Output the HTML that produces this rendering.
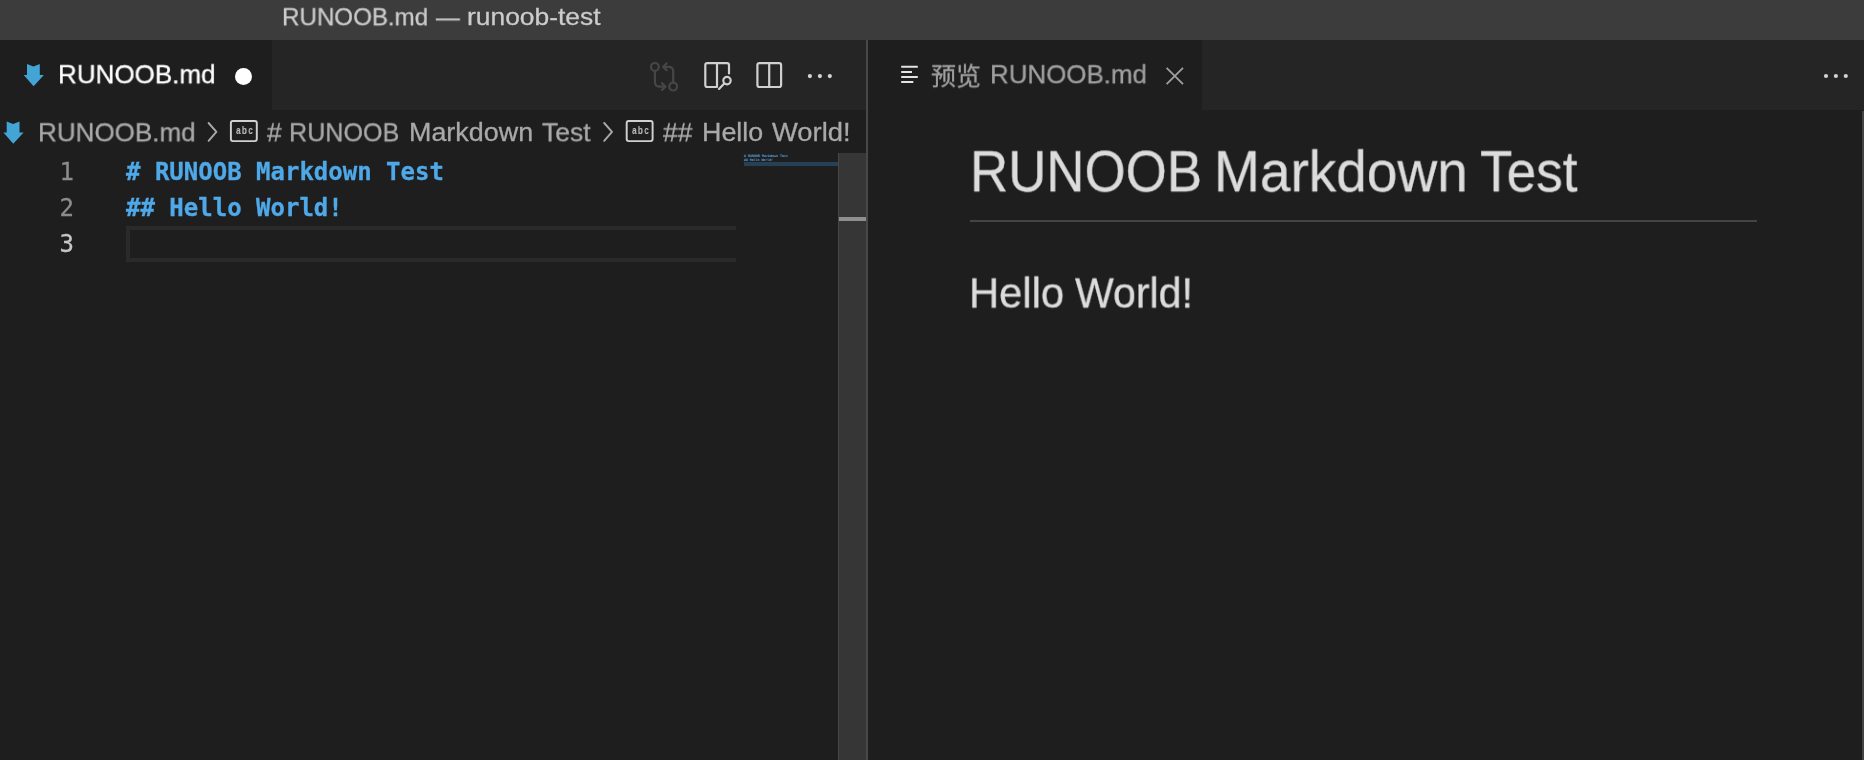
<!DOCTYPE html>
<html lang="zh">
<head>
<meta charset="utf-8">
<title>RUNOOB.md — runoob-test</title>
<style>
html,body{margin:0;padding:0;}
body{width:1864px;height:760px;overflow:hidden;background:#1e1e1e;position:relative;
  font-family:"Liberation Sans","Noto Sans CJK SC",sans-serif;color:#ccc;}
.abs{position:absolute;}
.t{position:absolute;white-space:nowrap;line-height:1;will-change:transform;transform-origin:0 0;-webkit-text-stroke:0.3px currentColor;}
#titlebar{left:0;top:0;width:1864px;height:40px;background:#3c3c3c;}
#tabsL{left:0;top:40px;width:866px;height:70px;background:#252526;}
#tabL{left:0;top:40px;width:272px;height:70px;background:#1e1e1e;}
#dot{left:235.3px;top:67.6px;width:17px;height:17px;border-radius:50%;background:#fff;}
#sep{left:866px;top:40px;width:2px;height:720px;background:#484848;}
#tabsR{left:868px;top:40px;width:996px;height:70px;background:#252526;}
#tabR{left:868px;top:40px;width:334px;height:70px;background:#1e1e1e;}
.ln{font-family:"DejaVu Sans Mono","Liberation Mono",monospace;font-size:24px;color:#8c8c8c;width:40px;text-align:right;left:34px;}
.code{font-family:"DejaVu Sans Mono","Liberation Mono",monospace;font-size:24px;font-weight:bold;color:#4fa8e8;left:126px;}
#curline{left:126px;top:226px;width:606px;height:28px;border:4px solid #2a2a2a;border-right:none;}
#scroll{left:838px;top:153px;width:26.5px;height:607px;background:#363636;border-left:1.5px solid #474747;}
#scrollmark{left:838.5px;top:217px;width:27.5px;height:3.8px;background:#8f8f8f;}
#mmhl{left:744px;top:162px;width:94px;height:4px;background:#264056;}
#h1line{left:970px;top:219.5px;width:787px;height:2px;background:#444;}
#rstrip{left:1861.7px;top:110.5px;width:2.3px;height:650px;background:#434343;}
.abc{font-size:11px;font-weight:bold;color:#c4c4c4;letter-spacing:1.7px;transform:scaleX(0.75);transform-origin:0 0;-webkit-text-stroke:0;}
</style>
</head>
<body>
<div id="titlebar" class="abs"></div>
<div id="tabsL" class="abs"></div>
<div id="tabL" class="abs"></div>
<div id="tabsR" class="abs"></div>
<div id="tabR" class="abs"></div>

<!-- markdown file icons -->
<svg class="abs" style="left:20px;top:60px" width="28" height="30" viewBox="20 60 28 30"><path d="M27 64 L33.4 66.5 L39.8 64 L39.8 75 L43.9 75 L33.6 86.3 L23.7 75 L27 75 Z" fill="#42a5d5"/></svg>
<svg class="abs" style="left:0px;top:117px" width="28" height="30" viewBox="20 60 28 30"><path d="M27 64 L33.4 66.5 L39.8 64 L39.8 75 L43.9 75 L33.6 86.3 L23.7 75 L27 75 Z" fill="#42a5d5" transform="translate(-0.3,0.4)"/></svg>
<div id="dot" class="abs"></div>

<!-- editor toolbar icons -->
<svg class="abs" style="left:640px;top:50px" width="210" height="50" viewBox="640 50 210 50" fill="none" stroke-linecap="round" stroke-linejoin="round">
 <g stroke="#464646" stroke-width="2.2">
  <circle cx="654.9" cy="66.9" r="3.9"/>
  <circle cx="673.2" cy="86.6" r="3.9"/>
  <path d="M654.9 71.5 V82 Q654.9 86.6 659.5 86.6 H665"/>
  <path d="M662 83.2 L665.4 86.6 L662 90"/>
  <path d="M673.2 82 V71.5 Q673.2 66.9 668.6 66.9 H663.5"/>
  <path d="M666.6 63.5 L663.2 66.9 L666.6 70.3"/>
 </g>
 <g stroke="#d0d0d0" stroke-width="2.2">
  <path d="M729 73.5 V65 Q729 63.1 727 63.1 H707.3 Q705.3 63.1 705.3 65 V85 Q705.3 87 707.3 87 H716"/>
  <path d="M717 63.1 V87"/>
  <circle cx="727" cy="80.6" r="3.7"/>
  <path d="M724.2 83.6 L719 88.9"/>
  <rect x="757.4" y="63.1" width="23.7" height="23.9" rx="2"/>
  <path d="M769.2 63.1 V87"/>
 </g>
 <g fill="#d4d4d4" stroke="none">
  <circle cx="809.9" cy="76.1" r="2.1"/><circle cx="819.9" cy="76.1" r="2.1"/><circle cx="829.8" cy="76.1" r="2.1"/>
 </g>
</svg>

<!-- breadcrumb chevrons + symbol icons -->
<svg class="abs" style="left:200px;top:112px" width="470" height="40" viewBox="200 112 470 40" fill="none" stroke-linejoin="round">
 <g stroke="#a9a9a9" stroke-width="1.9" stroke-linecap="round">
  <path d="M208.6 123 L216.4 131.9 L208.6 140.8"/>
  <path d="M604.2 123 L612 131.9 L604.2 140.8"/>
 </g>
 <g stroke="#d0d0d0" stroke-width="1.95">
  <rect x="230.9" y="120.9" width="25.9" height="20.2" rx="2"/>
  <rect x="626.7" y="120.9" width="25.9" height="20.2" rx="2"/>
 </g>
</svg>
<div class="t abc" style="left:235.7px;top:125px">abc</div>
<div class="t abc" style="left:631.5px;top:125px">abc</div>

<!-- preview tab icons -->
<svg class="abs" style="left:895px;top:60px" width="300" height="32" viewBox="895 60 300 32" fill="none">
 <g stroke="#e4e4e4" stroke-width="2">
  <path d="M901.2 66.8 H917.8 M901.2 71.9 H912 M901.2 77 H917.8 M901.2 82.1 H913.3"/>
 </g>
 <g stroke="#a0a0a0" stroke-width="1.8">
  <path d="M1166.6 67.8 L1183 84.2 M1183 67.8 L1166.6 84.2"/>
 </g>
</svg>
<svg class="abs" style="left:1815px;top:66px" width="40" height="20" viewBox="1815 66 40 20"><g fill="#d4d4d4"><circle cx="1826" cy="76" r="2.1"/><circle cx="1835.9" cy="76" r="2.1"/><circle cx="1845.8" cy="76" r="2.1"/></g></svg>

<div class="t" style="left:282.12px;top:5px;font-size:24.5px;color:#cccccc;transform:translateY(0.2px) scaleX(0.9849);">RUNOOB.md</div>
<div class="t" style="left:435.59px;top:5px;font-size:24.5px;color:#cccccc;transform:translateY(0.2px) scaleX(0.97);">—</div>
<div class="t" style="left:466.96px;top:5px;font-size:24.5px;color:#cccccc;transform:translateY(0.2px) scaleX(1.0773);">runoob-test</div>
<div class="t" style="left:58.07px;top:61px;font-size:26.5px;color:#ffffff;transform:translateY(0.2px) scaleX(0.9814);">RUNOOB.md</div>
<div class="t" style="left:37.97px;top:119px;font-size:26.5px;color:#a9a9a9;transform:translateY(0.3px) scaleX(0.982);">RUNOOB.md</div>
<div class="t" style="left:266.64px;top:119px;font-size:26.5px;color:#a9a9a9;transform:translateY(0.3px) scaleX(0.9917);">#</div>
<div class="t" style="left:289.24px;top:119px;font-size:26.5px;color:#a9a9a9;transform:translateY(0.3px) scaleX(0.9476);">RUNOOB</div>
<div class="t" style="left:409.0px;top:119px;font-size:26.5px;color:#a9a9a9;transform:translateY(0.3px) scaleX(1.0152);">Markdown</div>
<div class="t" style="left:541.59px;top:119px;font-size:26.5px;color:#a9a9a9;transform:translateY(0.3px) scaleX(0.9983);">Test</div>
<div class="t" style="left:663.34px;top:119px;font-size:26.5px;color:#a9a9a9;transform:translateY(0.3px) scaleX(0.9977);">##</div>
<div class="t" style="left:701.8px;top:119px;font-size:26.5px;color:#a9a9a9;transform:translateY(0.3px) scaleX(1.0133);">Hello</div>
<div class="t" style="left:771.69px;top:119px;font-size:26.5px;color:#a9a9a9;transform:translateY(0.3px) scaleX(1.0318);">World!</div>
<div class="t" style="left:931.14px;top:64px;font-size:25px;color:#a0a0a0;transform:translateY(0.3px) scaleX(0.998);">预览</div>
<div class="t" style="left:989.58px;top:61px;font-size:26.5px;color:#a0a0a0;transform:translateY(0.2px) scaleX(0.9776);">RUNOOB.md</div>
<div class="t" style="left:969.55px;top:143px;font-size:57.5px;color:#dcdcdc;transform:translateY(0.3px) scaleX(0.9198);">RUNOOB</div>
<div class="t" style="left:1213.59px;top:143px;font-size:57.5px;color:#dcdcdc;transform:translateY(0.3px) scaleX(0.9566);">Markdown</div>
<div class="t" style="left:1479.56px;top:143px;font-size:57.5px;color:#dcdcdc;transform:translateY(0.3px) scaleX(0.9244);">Test</div>
<div class="t" style="left:969.23px;top:271px;font-size:43px;color:#dcdcdc;transform:translateY(0.5px) scaleX(0.9709);">Hello</div>
<div class="t" style="left:1074.75px;top:271px;font-size:43px;color:#dcdcdc;transform:translateY(0.5px) scaleX(0.9555);">World!</div>

<!-- editor -->
<div class="t ln" style="top:160px">1</div>
<div class="t ln" style="top:196px">2</div>
<div class="t ln" style="top:232px;color:#c6c6c6">3</div>
<div class="t code" style="top:160px"># RUNOOB Markdown Test</div>
<div class="t code" style="top:196px">## Hello World!</div>
<div id="curline" class="abs"></div>
<svg class="abs" style="left:743px;top:153px" width="96" height="10" viewBox="0 0 96 10"><g font-family="DejaVu Sans Mono, Liberation Mono, monospace" font-weight="bold" font-size="3.4" fill="#5b9dd3"><text x="1" y="4.1" textLength="44" lengthAdjust="spacingAndGlyphs"># RUNOOB Markdown Test</text><text x="1" y="8" textLength="29" lengthAdjust="spacingAndGlyphs">## Hello World!</text></g></svg>
<div id="mmhl" class="abs"></div>
<div id="scroll" class="abs"></div>
<div id="scrollmark" class="abs"></div>
<div id="sep" class="abs"></div>

<div id="h1line" class="abs"></div>
<div id="rstrip" class="abs"></div>
</body>
</html>
